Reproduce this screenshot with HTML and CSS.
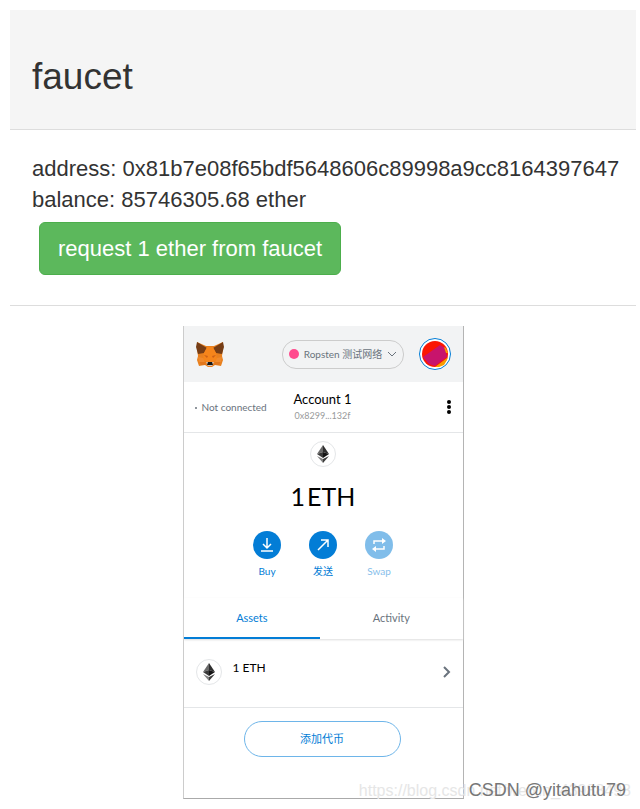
FILE: index.html
```html
<!DOCTYPE html>
<html lang="en">
<head>
    <meta charset="UTF-8">
    <meta name="viewport" content="width=device-width, initial-scale=1.0">
    <title>faucet</title>
    <link rel="stylesheet" href="styles.css">
</head>
<body>

<div class="panel">
    <header class="panel-heading">
        <h1>faucet</h1>
    </header>
    <div class="panel-body">
        <div>address: 0x81b7e08f65bdf5648606c89998a9cc8164397647</div>
        <div>balance: 85746305.68 ether</div>
        <button class="btn-request" type="button">request 1 ether from faucet</button>
    </div>
</div>

<!-- Wallet popup -->
<main class="wallet">
    <div class="wallet-header">
        <svg class="fox" viewBox="0 0 28 26" aria-label="Wallet logo">
            <path fill="#e8801f" d="M1 1l9 4h8l9-4 0 7-1 7 1 4-2 6-6-1-3 2h-4l-3-2-6 1-2-6 1-4-1-7z"/>
            <path fill="#763d16" d="M1 1l10 6-3 5-6 1L0 6zM27 1L17 7l3 5 6 1 2-7z"/>
            <path fill="#f6851b" d="M11 6h6l3 6 1 7-4 2h-6l-4-2 1-7z"/>
            <path fill="#cd6116" d="M8 14l4 1-1 2zM20 14l-4 1 1 2z"/>
            <path fill="#e2761b" d="M3 19l6 1 1 4-5 0zM25 19l-6 1-1 4 5 0z"/>
            <path fill="#f08a2d" d="M2 16l5 1 2 4-6 0zM26 16l-5 1-2 4 6 0z"/>
            <path fill="#d7c1b3" d="M10 21l2 4h4l2-4z"/>
            <path fill="#161616" d="M12 21h4l1 3h-6z"/>
        </svg>
        <button class="network" type="button">
            <span class="network-dot"></span>
            <span>Ropsten 测试网络</span>
            <svg class="chevron-down" viewBox="0 0 10 6"><path d="M1 1l4 4 4-4"/></svg>
        </button>
        <button class="avatar" type="button" aria-label="My accounts">
            <svg viewBox="0 0 26 26">
                <circle cx="13" cy="13" r="13" fill="#fb1702"/>
                <path fill="#c8146c" d="M1 16L18 4l5 3 2 9-12 9-6-2z"/>
                <path fill="#f99c00" d="M13 26l12-9 1-1-1 3-3 5-5 2z"/>
                <path fill="#f99c00" d="M22 6l2 1 2 5-2 0z"/>
            </svg>
        </button>
    </div>

    <div class="account-bar">
        <div class="status">Not connected</div>
        <div class="account">
            <div class="account-name">Account 1</div>
            <div class="account-address">0x8299...132f</div>
        </div>
        <button class="menu" type="button" aria-label="Account options">
            <svg viewBox="0 0 4 14"><circle cx="2" cy="2" r="2"/><circle cx="2" cy="7" r="2"/><circle cx="2" cy="12" r="2"/></svg>
        </button>
    </div>

    <section class="overview">
        <span class="eth-icon">
            <svg viewBox="0 0 12 18">
                <path fill="#6a6a6a" d="M6 0v7L0 9z"/>
                <path fill="#2f2f2f" d="M6 0v7l6 2z"/>
                <path fill="#393939" d="M0 9l6-2v6z"/>
                <path fill="#141414" d="M12 9L6 7v6z"/>
                <path fill="#828282" d="M0 11l6 3v4z"/>
                <path fill="#3c3c3b" d="M12 11l-6 3v4z"/>
            </svg>
        </span>
        <div class="balance"><span>1</span><span>ETH</span></div>
        <div class="actions">
            <button class="action" type="button">
                <span class="action-circle"><svg viewBox="0 0 16 16"><path d="M8 1v9M4 7l4 4 4-4M2 14h12"/></svg></span>
                <span>Buy</span>
            </button>
            <button class="action" type="button">
                <span class="action-circle"><svg viewBox="0 0 16 16"><path d="M3 13L13 3M6 3h7v7"/></svg></span>
                <span>发送</span>
            </button>
            <button class="action" type="button" disabled>
                <span class="action-circle"><svg viewBox="0 0 16 16"><path d="M3 7V4h9M13 9v3H4"/><path class="solid" d="M11 1l4 3-4 3zM5 9l-4 3 4 3z"/></svg></span>
                <span>Swap</span>
            </button>
        </div>
    </section>

    <nav class="tabs">
        <button class="tab tab-active" type="button">Assets</button>
        <button class="tab" type="button">Activity</button>
    </nav>

    <div class="asset">
        <span class="eth-icon">
            <svg viewBox="0 0 12 18">
                <path fill="#6a6a6a" d="M6 0v7L0 9z"/>
                <path fill="#2f2f2f" d="M6 0v7l6 2z"/>
                <path fill="#393939" d="M0 9l6-2v6z"/>
                <path fill="#141414" d="M12 9L6 7v6z"/>
                <path fill="#828282" d="M0 11l6 3v4z"/>
                <path fill="#3c3c3b" d="M12 11l-6 3v4z"/>
            </svg>
        </span>
        <span class="asset-amount">1 ETH</span>
        <svg class="chevron-right" viewBox="0 0 8 12"><path d="M1 1l5 5-5 5"/></svg>
    </div>

    <div class="add-token">
        <button type="button">添加代币</button>
    </div>
</main>

<div class="watermark watermark-url">https://blog.csdn.net/weixin_43988498</div>
<div class="watermark watermark-author">CSDN @yitahutu79</div>

</body>
</html>
```
FILE: styles.css
```css
body {
    font-family: "Liberation Sans", Arial, sans-serif;
    background-color: #fff;
    color: #333;
    margin: 0;
    padding: 10px 4px 11px 10px;
}
button {
    font-family: inherit;
    border: none;
    background: none;
    padding: 0;
    cursor: pointer;
}
svg {
    display: block;
}

/* Faucet panel */
.panel {
    border-bottom: 1px solid #ddd;
}
.panel-heading {
    background-color: #f5f5f5;
    border-bottom: 1px solid #ddd;
    padding: 45px 22px 30px;
}
h1 {
    margin: 0;
    font-size: 37px;
    font-weight: normal;
    line-height: 44px;
}
.panel-body {
    padding: 23px 12px 30px 22px;
    font-size: 22px;
    line-height: 31px;
    overflow-wrap: anywhere;
}
.btn-request {
    display: block;
    margin: 7px 0 0 7px;
    padding: 10px 18px;
    border: 1px solid #4cae4c;
    border-radius: 6px;
    background-color: #5cb85c;
    color: #fff;
    font-size: 22px;
    line-height: 31px;
}

/* Wallet popup */
.wallet {
    box-sizing: border-box;
    max-width: 281px;
    margin: 20px auto 0;
    border: 1px solid #ccc;
    border-top: none;
    border-right-color: #b4b4b4;
    border-bottom-color: #aaa;
    font-family: Lato, "Noto Sans CJK SC", sans-serif;
    font-size: 10px;
    line-height: 14px;
}
.wallet-header {
    display: flex;
    align-items: center;
    justify-content: space-between;
    background-color: #f2f3f4;
    padding: 12px;
}
.fox {
    width: 28px;
    height: 26px;
}
.network {
    display: flex;
    align-items: center;
    gap: 5px;
    margin-left: 44px;
    padding: 6px;
    border: 1px solid #ccc;
    border-radius: 14px;
    color: #6a737d;
    font-size: 10px;
    line-height: 15px;
}
.network-dot {
    width: 10px;
    height: 10px;
    border-radius: 50%;
    background-color: #ff4a8d;
}
.chevron-down {
    width: 10px;
    height: 6px;
    fill: none;
    stroke: #6a737d;
}
.avatar {
    box-sizing: border-box;
    width: 32px;
    height: 32px;
    padding: 2px;
    border: 1px solid #037dd6;
    border-radius: 50%;
    background-color: #fff;
}
.account-bar {
    display: grid;
    grid-template-columns: 1fr 1fr 1fr;
    align-items: center;
    padding: 8px 12px 8px 11px;
    border-bottom: 1px solid #e4e6e8;
}
.status {
    color: #6a737d;
    white-space: nowrap;
}
.status::before {
    content: "";
    display: inline-block;
    width: 2px;
    height: 2px;
    margin-right: 5px;
    border-radius: 50%;
    background-color: #6a737d;
    vertical-align: middle;
}
.account {
    text-align: center;
}
.account-name {
    color: #000;
    font-size: 13px;
    line-height: 18px;
}
.account-address {
    color: #989a9b;
    font-size: 9px;
    line-height: 16px;
}
.menu {
    justify-self: end;
}
.menu svg {
    width: 4px;
    height: 14px;
}
.overview {
    display: flex;
    flex-direction: column;
    align-items: center;
    padding: 8px 0 20px;
}
.eth-icon {
    box-sizing: border-box;
    display: flex;
    align-items: center;
    justify-content: center;
    width: 26px;
    height: 26px;
    border: 1px solid #e4e6e8;
    border-radius: 50%;
}
.eth-icon svg {
    width: 12px;
    height: 18px;
}
.balance {
    display: flex;
    gap: 2px;
    margin: 12px 0 18px;
    color: #000;
    font-size: 25px;
    line-height: 34px;
}
.actions {
    display: flex;
}
.action {
    display: flex;
    flex-direction: column;
    align-items: center;
    gap: 5px;
    width: 56px;
    color: #037dd6;
    font-size: 10px;
    line-height: 14px;
}
.action:disabled {
    opacity: 0.5;
}
.action-circle {
    display: flex;
    align-items: center;
    justify-content: center;
    width: 28px;
    height: 28px;
    border-radius: 50%;
    background-color: #037dd6;
}
.action-circle svg {
    width: 16px;
    height: 16px;
    fill: none;
    stroke: #fff;
    stroke-width: 1.5;
}
.action-circle .solid {
    fill: #fff;
    stroke: none;
}
.tabs {
    display: flex;
    box-shadow: 0 1px 2px #ddd;
}
.tab {
    flex: 1;
    padding: 13px 0 12px;
    border-bottom: 2px solid transparent;
    color: #6a737d;
    font-size: 11px;
    line-height: 14px;
}
.tab-active {
    flex: 0 0 49%;
    border-bottom-color: #037dd6;
    color: #037dd6;
}
.asset {
    display: flex;
    align-items: center;
    gap: 11px;
    padding: 20px 12px 22px;
    border-bottom: 1px solid #e4e6e8;
}
.asset-amount {
    flex: 1;
    padding-bottom: 8px;
    color: #000;
    font-size: 12px;
    line-height: 14px;
}
.chevron-right {
    width: 8px;
    height: 12px;
    fill: none;
    stroke: #6a737d;
    stroke-width: 2;
}
.add-token {
    padding: 13px 62px 41px 60px;
}
.add-token button {
    width: 100%;
    padding: 9px 0;
    border: 1px solid #6eb5e9;
    border-radius: 18px;
    color: #037dd6;
    font-size: 11px;
    line-height: 16px;
}

/* Watermarks lie over the bottom of the page */
.watermark {
    position: absolute;
    white-space: nowrap;
    line-height: 20px;
}
.watermark-url {
    right: 9px;
    top: 781px;
    color: #e6e6e6;
    font-size: 16px;
}
.watermark-author {
    right: 14px;
    top: 780px;
    color: #777;
    font-size: 18px;
}
```
